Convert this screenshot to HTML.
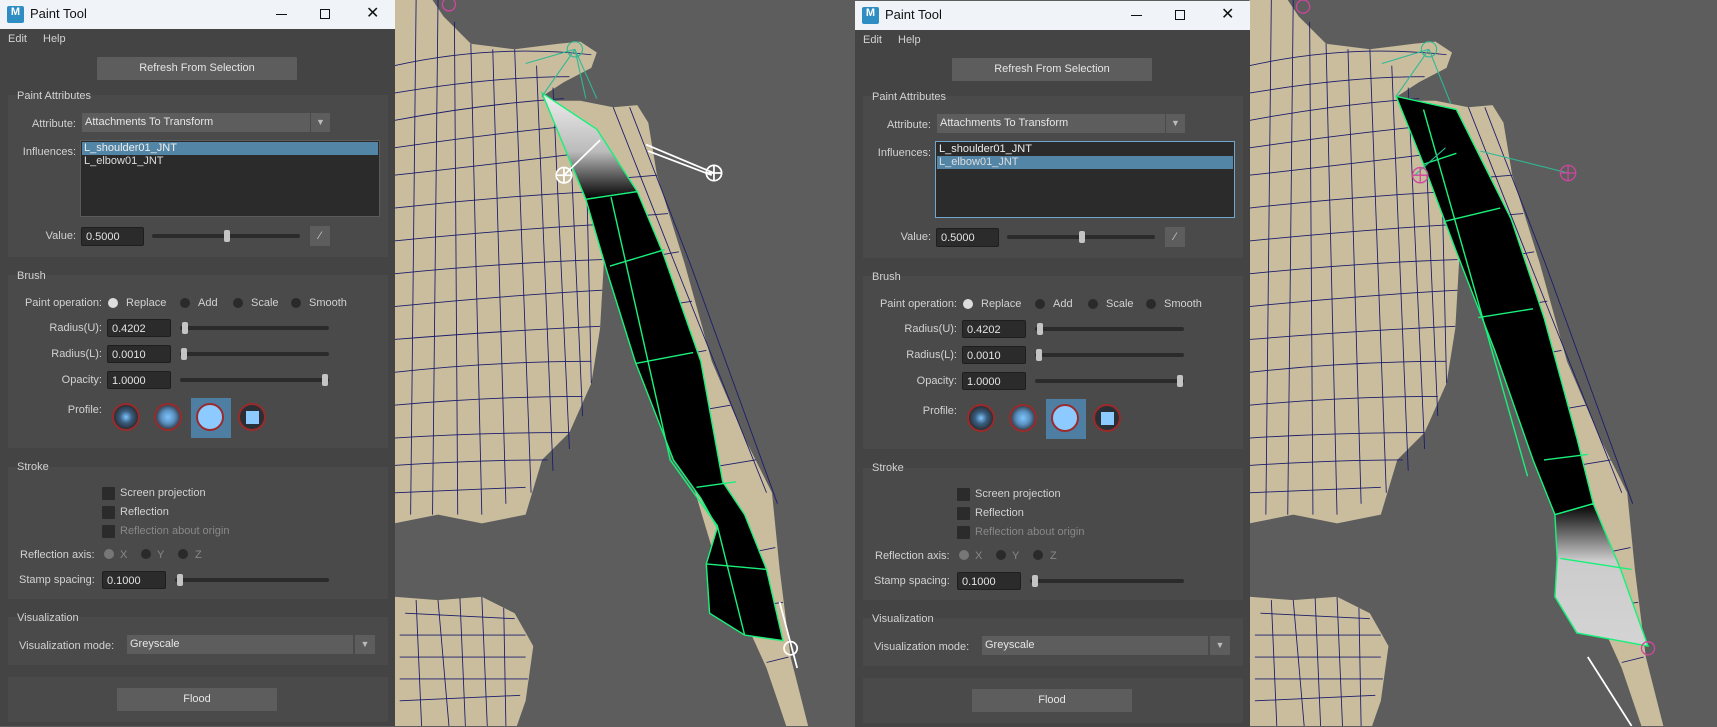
<!DOCTYPE html>
<html><head><meta charset="utf-8"><style>
*{margin:0;padding:0;box-sizing:border-box}
body{width:1717px;height:726px;overflow:hidden;background:#5d5d5d;font-family:"Liberation Sans",sans-serif;font-size:11px;color:#d6d6d6;position:relative}
#vp{position:absolute;left:0;top:0;width:1717px;height:726px}
.win{position:absolute;top:0;width:395px;height:726px;background:#444;overflow:hidden}
.win *{position:absolute;white-space:nowrap}
.tb{left:0;top:0;width:395px;height:29px;background:#f0f4f9;color:#111;font-size:13px}
.ico{left:7px;top:6px;width:17px;height:17px;background:#2e8ec4;border-radius:2px;color:#fff;font-size:11px;font-weight:bold;text-align:center;line-height:13px}
.fr{background:#4a4a4a;left:8px;width:380px}
.lbl{color:#d2d2d2}
.ra{text-align:right}
.btn{background:#5d5d5d;color:#e6e6e6;text-align:center;border-radius:1px}
.fld{background:#2b2b2b;border:1px solid #1e1e1e;color:#e4e4e4;padding-left:4px;border-radius:2px;line-height:18px!important}
.trk{height:4px;background:#2b2b2b;border-radius:2px}
.thm{width:6px;height:12px;background:#c4c4c4;border-radius:2px}
.rad{width:10px;height:10px;border-radius:50%;background:#2a2a2a}
.chk{width:13px;height:13px;background:#2b2b2b;border-radius:1px}
.prof{width:28px;height:28px;border-radius:50%;border:2px solid #9b2a2a;background:#2c3a48}
</style></head><body>
<svg id="vp" viewBox="0 0 1568 663" preserveAspectRatio="none">
<g id="body">
<path d="M360 0 L395 0 L405 15 L430 40 L470 45 L510 40 L530 38 L545 48 L540 62 L515 75 L495 88 L525 125 L545 165 L552 230 L548 300 L540 350 L520 395 L495 420 L480 470 L440 478 L400 470 L360 478Z" fill="#c9bd9e"/>
<path d="M360 545 L400 548 L440 545 L470 560 L487 590 L480 640 L472 663 L360 663Z" fill="#c9bd9e"/>
<path d="M498 92 L530 92 L560 98 L582 96 L592 112 L600 160 L625 240 L650 330 L680 400 L705 450 L712 520 L722 600 L738 663 L718 663 L700 610 L650 500 L635 450 L600 360 L565 260 L530 160Z" fill="#c9bd9e"/>
<g stroke="#1c1c6a" stroke-width="0.8" fill="none">
<path d="M360 60 Q450 40 540 50 M360 85 Q450 70 520 70 M360 110 Q440 95 515 90 M360 135 Q450 122 522 115 M360 160 Q450 150 530 140 M360 190 Q450 180 540 175 M360 220 Q460 210 548 205 M360 250 Q460 240 550 237 M360 280 Q460 270 550 265 M360 310 Q460 302 548 298 M360 340 Q450 330 540 330 M360 370 Q450 362 532 362 M360 400 Q440 395 520 395 M360 425 Q440 420 500 420 M360 450 L480 445"/>
<path d="M380 0 L375 470 M400 0 L395 470 M415 20 L418 470 M430 40 L440 470 M450 45 L462 460 M470 45 L485 450 M490 60 L505 430 M505 80 L520 410 M520 110 L532 380 M535 130 L540 350"/>
<path d="M370 560 L470 565 M365 580 L480 580 M365 600 L480 600 M365 620 L482 620 M365 640 L475 635 M380 548 L385 663 M400 548 L410 663 M420 546 L425 663 M440 545 L445 663 M460 555 L462 663"/>
<path d="M600 160 L540 165 M610 195 L548 200 M620 230 L560 240 M632 275 L570 285 M645 320 L590 330 M667 370 L610 380 M690 420 L630 430 M708 500 L660 510 M715 550 L680 555 M720 600 L700 605 M560 98 L620 250 L700 450 M575 98 L630 240 L710 460"/>
</g>
</g>
<use href="#body" transform="translate(781,0)"/>
<defs><linearGradient id="g1" x1="0" y1="0" x2="0" y2="1"><stop offset="0" stop-color="#eee"/><stop offset=".55" stop-color="#bbb"/><stop offset="1" stop-color="#000"/></linearGradient>
<linearGradient id="g2" x1="0" y1="0" x2="0" y2="1"><stop offset="0" stop-color="#000"/><stop offset=".4" stop-color="#ccc"/><stop offset="1" stop-color="#d4d4d4"/></linearGradient></defs>
<g stroke="#19f07a" stroke-width="1.3">
<path d="M495 85 L545 118 L582 175 L535 182Z" fill="url(#g1)"/>
<path d="M535 182 L582 175 L605 230 L640 330 L660 440 L680 470 L700 520 L715 585 L680 580 L648 560 L645 515 L655 482 L640 455 L615 420 L580 330 L555 250Z" fill="#000"/>
<path d="M557 243 L607 228 M580 332 L633 322 M636 445 L672 440 M645 515 L700 520 M558 180 L612 420 L655 480 L680 580" fill="none"/>
<path d="M1275 88 L1330 100 L1380 200 L1410 290 L1440 400 L1455 460 L1420 470 L1400 420 L1365 320 L1330 230 L1300 150Z" fill="#000"/>
<path d="M1420 470 L1455 460 L1480 520 L1505 590 L1440 578 L1420 545 L1422 510Z" fill="url(#g2)"/>
<path d="M1300 150 L1330 140 M1320 202 L1370 190 M1350 290 L1400 282 M1410 420 L1450 415 M1300 100 L1395 435 M1425 510 L1490 520" fill="none"/>
</g>
<g stroke="#2fb894" stroke-width="1" fill="none"><path d="M525 45 L480 58 M525 45 L495 88 M525 45 L545 90 M525 45 L535 90 M1305 45 L1262 58 M1305 45 L1275 88 M1305 45 L1325 95 M1352 138 L1432 158 M1292 160 L1320 135"/><circle cx="525" cy="45" r="7"/><circle cx="1305" cy="45" r="7"/></g>
<g stroke="#fff" stroke-width="1.6" fill="none"><path d="M515 160 L548 128 M590 132 L652 158 M592 138 L650 160 M508 160 h14 M515 153 v14 M645 158 h14 M652 151 v14 M712 550 L728 610 M1450 600 L1490 663"/><circle cx="515" cy="160" r="7"/><circle cx="652" cy="158" r="7"/><circle cx="722" cy="592" r="6"/></g>
<g stroke="#d0469e" stroke-width="1.2" fill="none"><circle cx="410" cy="4" r="6"/><circle cx="1190" cy="6" r="6"/><circle cx="1297" cy="160" r="7"/><circle cx="1432" cy="158" r="7"/><circle cx="1505" cy="592" r="6"/><path d="M1290 160h14M1297 153v14M1425 158h14M1432 151v14"/></g>
</svg>

<div class="win" style="left:0">
<div class="tb"><div class="ico">M</div><div style="left:30px;top:6px">Paint Tool</div><div style="left:276px;top:14px;width:11px;height:1px;background:#111"></div><div style="left:320px;top:9px;width:10px;height:10px;border:1px solid #111"></div><div style="left:366px;top:3px;font-size:16px">✕</div></div>
<div class="lbl" style="left:8px;top:33px">Edit</div><div class="lbl" style="left:43px;top:33px">Help</div>
<div class="btn" style="left:97px;top:57px;width:200px;height:23px;line-height:23px">Refresh From Selection</div>
<div class="fr" style="top:95px;height:162px"></div><div class="lbl" style="left:17px;top:90px">Paint Attributes</div>
<div class="lbl ra" style="left:0;width:76px;top:118px">Attribute:</div>
<div style="left:82px;top:113px;width:228px;height:19px;background:#5d5d5d;color:#e6e6e6;line-height:19px;padding-left:3px">Attachments To Transform</div>
<div style="left:311px;top:113px;width:19px;height:19px;background:#5d5d5d;color:#bbb;text-align:center;line-height:19px;font-size:9px">▼</div>
<div class="lbl ra" style="left:0;width:76px;top:146px">Influences:</div>
<div style="left:80px;top:140px;width:300px;height:77px;background:#2b2b2b;border:1px solid #5a5a5a"></div>
<div style="left:82px;top:142px;width:296px;height:13px;background:#5285a6"></div>
<div style="left:84px;top:142px;color:#eee">L_shoulder01_JNT</div><div style="left:84px;top:155px;color:#ddd">L_elbow01_JNT</div>
<div class="lbl ra" style="left:0;width:76px;top:230px">Value:</div>
<div class="fld" style="left:81px;top:227px;width:63px;height:19px">0.5000</div>
<div class="trk" style="left:152px;top:234px;width:148px"></div><div class="thm" style="left:224px;top:230px"></div>
<div style="left:310px;top:226px;width:20px;height:20px;background:#5d5d5d;color:#ccc;text-align:center;font-size:11px;line-height:20px">⁄</div>

<div class="fr" style="top:275px;height:173px"></div><div class="lbl" style="left:17px;top:270px">Brush</div>
<div class="lbl ra" style="left:0;width:102px;top:297px">Paint operation:</div>
<div class="rad" style="left:108px;top:298px;background:#ddd"></div><div class="lbl" style="left:126px;top:297px">Replace</div>
<div class="rad" style="left:180px;top:298px"></div><div class="lbl" style="left:198px;top:297px">Add</div>
<div class="rad" style="left:233px;top:298px"></div><div class="lbl" style="left:251px;top:297px">Scale</div>
<div class="rad" style="left:291px;top:298px"></div><div class="lbl" style="left:309px;top:297px">Smooth</div>
<div class="lbl ra" style="left:0;width:102px;top:322px">Radius(U):</div><div class="fld" style="left:107px;top:319px;width:64px;height:18px">0.4202</div><div class="trk" style="left:180px;top:326px;width:149px"></div><div class="thm" style="left:182px;top:322px"></div>
<div class="lbl ra" style="left:0;width:102px;top:348px">Radius(L):</div><div class="fld" style="left:107px;top:345px;width:64px;height:18px">0.0010</div><div class="trk" style="left:180px;top:352px;width:149px"></div><div class="thm" style="left:181px;top:348px"></div>
<div class="lbl ra" style="left:0;width:102px;top:374px">Opacity:</div><div class="fld" style="left:107px;top:371px;width:64px;height:18px">1.0000</div><div class="trk" style="left:180px;top:378px;width:149px"></div><div class="thm" style="left:322px;top:374px"></div>
<div class="lbl ra" style="left:0;width:102px;top:404px">Profile:</div>
<div class="prof" style="left:112px;top:403px;background:radial-gradient(#7ec4ff 0,#3a5e80 35%,#2a2f36 70%)"></div>
<div class="prof" style="left:154px;top:403px;background:radial-gradient(#7ec4ff 0,#5a90c0 40%,#2a2f36 80%)"></div>
<div style="left:191px;top:398px;width:40px;height:40px;background:#4e7fa3"></div>
<div class="prof" style="left:196px;top:403px;background:#8ccaff"></div>
<div class="prof" style="left:238px;top:403px;background:#2a2f36"><div style="left:6px;top:6px;width:13px;height:13px;background:#8ccaff"></div></div>

<div class="fr" style="top:467px;height:132px"></div><div class="lbl" style="left:17px;top:461px">Stroke</div>
<div class="chk" style="left:102px;top:487px"></div><div class="lbl" style="left:120px;top:487px">Screen projection</div>
<div class="chk" style="left:102px;top:506px"></div><div class="lbl" style="left:120px;top:506px">Reflection</div>
<div class="chk" style="left:102px;top:525px"></div><div class="lbl" style="left:120px;top:525px;color:#888">Reflection about origin</div>
<div class="lbl" style="left:20px;top:549px">Reflection axis:</div>
<div class="rad" style="left:104px;top:549px;background:#777"></div><div style="left:120px;top:549px;color:#888">X</div>
<div class="rad" style="left:141px;top:549px"></div><div style="left:157px;top:549px;color:#888">Y</div>
<div class="rad" style="left:178px;top:549px"></div><div style="left:195px;top:549px;color:#888">Z</div>
<div class="lbl" style="left:19px;top:574px">Stamp spacing:</div><div class="fld" style="left:102px;top:571px;width:64px;height:18px">0.1000</div><div class="trk" style="left:175px;top:578px;width:154px"></div><div class="thm" style="left:177px;top:574px"></div>

<div class="fr" style="top:617px;height:48px"></div><div class="lbl" style="left:17px;top:612px">Visualization</div>
<div class="lbl" style="left:19px;top:640px">Visualization mode:</div>
<div style="left:127px;top:635px;width:226px;height:19px;background:#5d5d5d;color:#e6e6e6;line-height:19px;padding-left:3px">Greyscale</div>
<div style="left:355px;top:635px;width:20px;height:19px;background:#5d5d5d;color:#bbb;text-align:center;line-height:19px;font-size:9px">▼</div>
<div class="fr" style="top:677px;height:45px"></div>
<div class="btn" style="left:117px;top:688px;width:160px;height:23px;line-height:23px">Flood</div>
</div>
<script>
var w=document.querySelector('.win');var c=w.cloneNode(true);c.style.left='855px';c.style.top='1px';document.body.appendChild(c);
var d=c.children;for(var i=0;i<d.length;i++){if(d[i].style.background==='rgb(82, 133, 166)')d[i].style.top='155px';if(d[i].style.border&&d[i].style.top==='140px')d[i].style.borderColor='#6fa6cc';}
</script>
</body></html>
